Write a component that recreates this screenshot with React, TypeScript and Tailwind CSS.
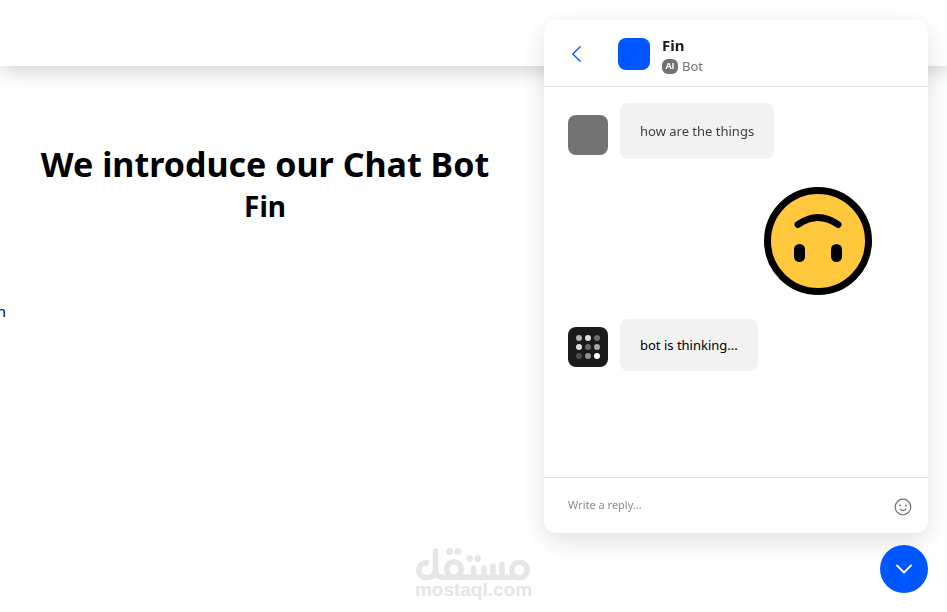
import React from 'react';

interface AvatarProps {
  className: string;
  children?: React.ReactNode;
}

const Avatar: React.FC<AvatarProps> = ({ className, children }) => (
  <div className={`size-10 shrink-0 rounded-lg ${className}`}>{children}</div>
);

const dots = ['#b0b0b0', '#e2e2e6', '#6e6e6e', '#dcdce2', '#6a6a6a', '#a8a8aa', '#4c4c4c', '#929294', '#ffffff'];

const ThinkingDots: React.FC = () => (
  <svg className="size-10" viewBox="0 0 40 40" aria-hidden="true">
    {dots.map((fill, i) => (
      <circle key={i} cx={11 + (i % 3) * 9} cy={11 + Math.floor(i / 3) * 9} r="3" fill={fill} />
    ))}
  </svg>
);

const UpsideDownFace: React.FC = () => (
  <svg className="size-[108px]" viewBox="0 0 108 108" role="img" aria-label="Upside-down face">
    <circle cx="54" cy="54" r="50.5" fill="#ffc83d" stroke="#000" strokeWidth="7" />
    <path d="M34 37.5Q54 23.5 74 37.5" fill="none" stroke="#000" strokeWidth="7" strokeLinecap="round" />
    <rect x="30" y="57" width="11" height="18" rx="5.5" />
    <rect x="67" y="57" width="11" height="18" rx="5.5" />
  </svg>
);

const MostaqlLogo: React.FC = () => (
  <div className="flex flex-col items-center text-[#e6e6e6]">
    <svg className="h-[34px] w-[114px]" viewBox="0 0 114 34" fill="none" stroke="currentColor" strokeWidth="5.6" strokeLinecap="round" strokeLinejoin="round" aria-hidden="true">
      <path d="M10.5 14.7C5.8 14.7 2.8 18 2.8 22.3C2.8 26.8 6.3 29.7 10.5 29.7C16 29.7 19.5 26.5 19.5 21V3" />
      <path d="M19.5 21C19.5 27 22 29.2 27 29.2H97" />
      <path d="M38 13.8A7.2 7.2 0 0 1 45.200 21C45.2 26 42 29.200 38 29.200C34 29.2 30.800 26 30.800 21A7.2 7.2 0 0 1 38 13.8Z" />
      <path d="M57.5 20V28M68 20V28M77 18.500V28M86 16.500V28" />
      <circle cx="103.5" cy="22" r="7.7" />
      <g fill="currentColor" stroke="none">
        <circle cx="33.700" cy="3.6" r="3.5" />
        <circle cx="41.900" cy="3.6" r="3.5" />
        <circle cx="53.700" cy="10.6" r="3.3" />
        <circle cx="61.600" cy="10.6" r="3.3" />
      </g>
    </svg>
    <span className="font-['Liberation_Sans',sans-serif] text-[19px] leading-4 font-bold">mostaql.com</span>
  </div>
);

const ChatWindow: React.FC = () => (
  <section className="flex min-h-0 w-96 flex-1 flex-col rounded-xl bg-white shadow-[0_8px_24px_rgba(0,0,0,0.12)]" aria-label="Chat with Fin">
    <header className="flex h-[67px] items-center border-b border-[#e1e1e1] px-5 pt-0.5">
      <button type="button" aria-label="Back" className="flex size-6 items-center justify-center text-[#0057ff]">
        <svg className="h-4 w-[9px]" viewBox="0 0 9 16" fill="none" stroke="currentColor" strokeWidth="1.3" strokeLinecap="round" strokeLinejoin="round">
          <path d="M8.2 .8L.8 8l7.4 7.200" />
        </svg>
      </button>
      <div className="ml-[30px] size-8 rounded-lg bg-[#0057ff]" />
      <div className="ml-3 pt-1">
        <h2 className="text-[15px] leading-5 font-bold text-[#1a1a1a]">Fin</h2>
        <p className="flex items-center gap-1 text-[13px] leading-[22px] text-[#737373]">
          <span className="flex h-[15px] w-4 items-center justify-center rounded-md bg-[#737373] font-['Open_Sans',sans-serif] text-[9px] font-bold text-white">AI</span>
          Bot
        </p>
      </div>
    </header>

    <div className="flex-1 px-6 pt-4">
      <div className="flex items-end gap-3">
        <Avatar className="mb-1 bg-[#737373]" />
        <p className="rounded-lg bg-[#f2f2f2] px-5 py-[18px] text-[13px] leading-5 text-[#404040]">how are the things</p>
      </div>
      <div className="mt-7 mr-8 flex justify-end">
        <UpsideDownFace />
      </div>
      <div className="mt-6 flex items-end gap-3">
        <Avatar className="mb-1 bg-[#1a1a1a]">
          <ThinkingDots />
        </Avatar>
        <p className="rounded-lg bg-[#f2f2f2] px-5 py-4 text-[13px] leading-5 text-black">bot is thinking...</p>
      </div>
    </div>

    <form className="flex h-14 items-center border-t border-[#e1e1e1] pr-4 pl-6">
      <input
        type="text"
        aria-label="Reply"
        placeholder="Write a reply..."
        className="min-w-0 flex-1 text-[11px] outline-none placeholder:text-[#8c8c8c]"
      />
      <button type="button" aria-label="Insert emoji" className="mt-0.5 text-[#737373]">
        <svg className="size-[18px]" viewBox="0 0 18 18" fill="none" stroke="currentColor" strokeWidth="1.2" strokeLinecap="round">
          <circle cx="9" cy="9" r="7.8" />
          <path d="M6.3 11.3Q9 13.4 11.7 11.3" />
          <circle cx="6" cy="7.5" r=".9" fill="currentColor" stroke="none" />
          <circle cx="12" cy="7.5" r=".9" fill="currentColor" stroke="none" />
        </svg>
      </button>
    </form>
  </section>
);

const App: React.FC = () => {
  return (
    <div className="flex min-h-screen flex-col bg-white font-['Noto_Sans','Open_Sans',sans-serif] text-black">
      <header className="h-[66px] bg-white shadow-[0_4px_20px_rgba(0,0,0,0.2)]" />

      <main className="flex-1">
        <div className="mr-[417px] pt-[74px] text-center">
          <h1 className="text-[34px] leading-[48px] font-bold whitespace-nowrap">We introduce our Chat Bot</h1>
          <h2 className="text-[28px] leading-9 font-bold">Fin</h2>
        </div>
        <p className="mt-[75px] flex w-1.5 justify-end overflow-hidden text-[15px] leading-6">n</p>
      </main>

      <footer className="flex justify-center pb-[14px]">
        <MostaqlLogo />
      </footer>

      <div className="fixed top-5 right-[19px] bottom-[19px] flex flex-col items-end gap-3">
        <ChatWindow />
        <button type="button" aria-label="Close chat" className="flex size-12 items-center justify-center rounded-full bg-[#0057ff] text-white">
          <svg className="h-[10px] w-4" viewBox="0 0 16 10" fill="none" stroke="currentColor" strokeWidth="1.8" strokeLinecap="round" strokeLinejoin="round">
            <path d="M1 1.5l7 7 7-7" />
          </svg>
        </button>
      </div>
    </div>
  );
};

export default App;
